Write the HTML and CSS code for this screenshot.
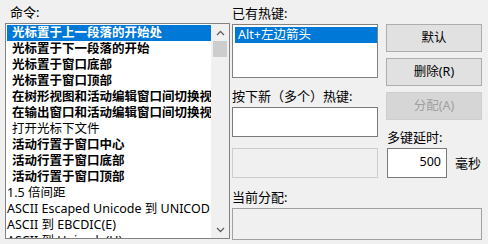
FILE: index.html
```html
<!DOCTYPE html>
<html>
<head>
<meta charset="utf-8">
<link rel="stylesheet" href="styles.css">
</head>
<body>
<div class="dlg">
  <div class="left">
    <div class="lbl cmd-lbl">命令:</div>
    <div class="listbox">
      <div class="items">
        <div class="row sel b ind">光标置于上一段落的开始处</div>
        <div class="row b ind">光标置于下一段落的开始</div>
        <div class="row b ind">光标置于窗口底部</div>
        <div class="row b ind">光标置于窗口顶部</div>
        <div class="row b ind">在树形视图和活动编辑窗口间切换视图</div>
        <div class="row b ind">在输出窗口和活动编辑窗口间切换视图</div>
        <div class="row ind">打开光标下文件</div>
        <div class="row b ind">活动行置于窗口中心</div>
        <div class="row b ind">活动行置于窗口底部</div>
        <div class="row b ind">活动行置于窗口顶部</div>
        <div class="row">1.5 倍间距</div>
        <div class="row">ASCII Escaped Unicode 到 UNICODE</div>
        <div class="row">ASCII 到 EBCDIC(E)</div>
        <div class="row">ASCII 到 Unicode(U)</div>
      </div>
      <div class="vscroll">
        <div class="arrow">
          <svg width="9" height="6" viewBox="0 0 9 6"><path d="M1 5 L4.5 1.5 L8 5" fill="none" stroke="#606060" stroke-width="1.3"/></svg>
        </div>
        <div class="thumb"></div>
        <div class="track"></div>
        <div class="arrow">
          <svg width="9" height="6" viewBox="0 0 9 6"><path d="M1 1 L4.5 4.5 L8 1" fill="none" stroke="#606060" stroke-width="1.3"/></svg>
        </div>
      </div>
    </div>
  </div>
  <div class="right">
    <div class="cols">
      <div class="col1">
        <div class="lbl">已有热键:</div>
        <div class="keylist">
          <div class="krow">Alt+左边箭头</div>
        </div>
        <div class="lbl newkey-lbl">按下新（多个）热键:</div>
        <div class="tbox"></div>
        <div class="tbox disabled"></div>
      </div>
      <div class="col2">
        <div class="btn">默认</div>
        <div class="btn">删除(R)</div>
        <div class="btn dis">分配(A)</div>
        <div class="lbl delay-lbl">多键延时:</div>
        <div class="delay-row">
          <div class="numbox">500</div>
          <div class="lbl">毫秒</div>
        </div>
      </div>
    </div>
    <div class="lbl cur-lbl">当前分配:</div>
    <div class="curbox"></div>
  </div>
</div>
</body>
</html>
```

FILE: styles.css
```css
html, body {
  margin: 0;
  padding: 0;
}
body {
  width: 488px;
  height: 244px;
  overflow: hidden;
  background: #f0f0f0;
  font-family: "Noto Sans", "Noto Sans CJK SC", sans-serif;
  font-size: 12px;
  color: #000;
}
.dlg {
  display: flex;
  height: 244px;
}
.lbl {
  line-height: 16px;
  height: 16px;
  white-space: nowrap;
  font-size: 13px;
}
.left {
  width: 225px;
  padding-left: 5px;
  padding-top: 4px;
  display: flex;
  flex-direction: column;
}
.cmd-lbl {
  margin-left: 5px;
  margin-bottom: 3px;
}
.listbox {
  display: flex;
  height: 214px;
  border: 1px solid #828282;
  background: #fff;
  overflow: hidden;
}
.items {
  flex: 1;
  padding: 1px 0 0 1px;
  overflow: hidden;
  min-width: 0;
}
.row {
  height: 16px;
  line-height: 16px;
  white-space: nowrap;
  overflow: hidden;
  font-size: 12.5px;
}
.row.b {
  font-weight: bold;
}
.row.ind {
  padding-left: 5px;
}
.row.sel {
  background: #0078d7;
  color: #fff;
}
.vscroll {
  width: 18px;
  background: #f0f0f0;
  display: flex;
  flex-direction: column;
  align-items: center;
}
.arrow {
  height: 17px;
  width: 18px;
  display: flex;
  align-items: center;
  justify-content: center;
}
.thumb {
  width: 14px;
  height: 16px;
  background: #cdcdcd;
}
.track {
  flex: 1;
}
.right {
  padding-left: 2px;
  padding-top: 5px;
  display: flex;
  flex-direction: column;
}
.cols {
  display: flex;
  gap: 8px;
}
.col1 {
  width: 146px;
  display: flex;
  flex-direction: column;
}
.keylist {
  margin-top: 3px;
  height: 50px;
  border: 1px solid #828282;
  background: #fff;
  padding: 2px 0 0 2px;
}
.krow {
  height: 16px;
  line-height: 16px;
  background: #0078d7;
  color: #fff;
  padding-left: 3px;
  font-size: 12.5px;
  white-space: nowrap;
}
.newkey-lbl {
  margin-top: 10px;
}
.tbox {
  margin-top: 3px;
  height: 28px;
  border: 1px solid #7a7a7a;
  background: #fff;
}
.tbox.disabled {
  margin-top: 11px;
  border-color: #cccccc;
  background: #f0f0f0;
}
.col2 {
  width: 96px;
  padding-top: 19px;
  display: flex;
  flex-direction: column;
  gap: 6px;
}
.btn {
  height: 26px;
  line-height: 26px;
  border: 1px solid #adadad;
  background: #e1e1e1;
  text-align: center;
  font-size: 12.5px;
}
.btn.dis {
  background: #d6d6d6;
  border-color: #cfcfcf;
  color: #a0a0a0;
}
.delay-lbl {
  margin-top: 3px;
  margin-left: 1px;
}
.delay-row {
  margin-top: -3px;
  margin-left: 1px;
  display: flex;
  align-items: center;
  gap: 8px;
}
.numbox {
  width: 53px;
  height: 28px;
  line-height: 26px;
  border: 1px solid #7a7a7a;
  background: #fff;
  text-align: right;
  padding-right: 5px;
  font-size: 12.5px;
}
.cur-lbl {
  margin-top: 11px;
}
.curbox {
  margin-top: 3px;
  width: 248px;
  height: 30px;
  border: 1px solid #a0a0a0;
  background: #f0f0f0;
}
```
